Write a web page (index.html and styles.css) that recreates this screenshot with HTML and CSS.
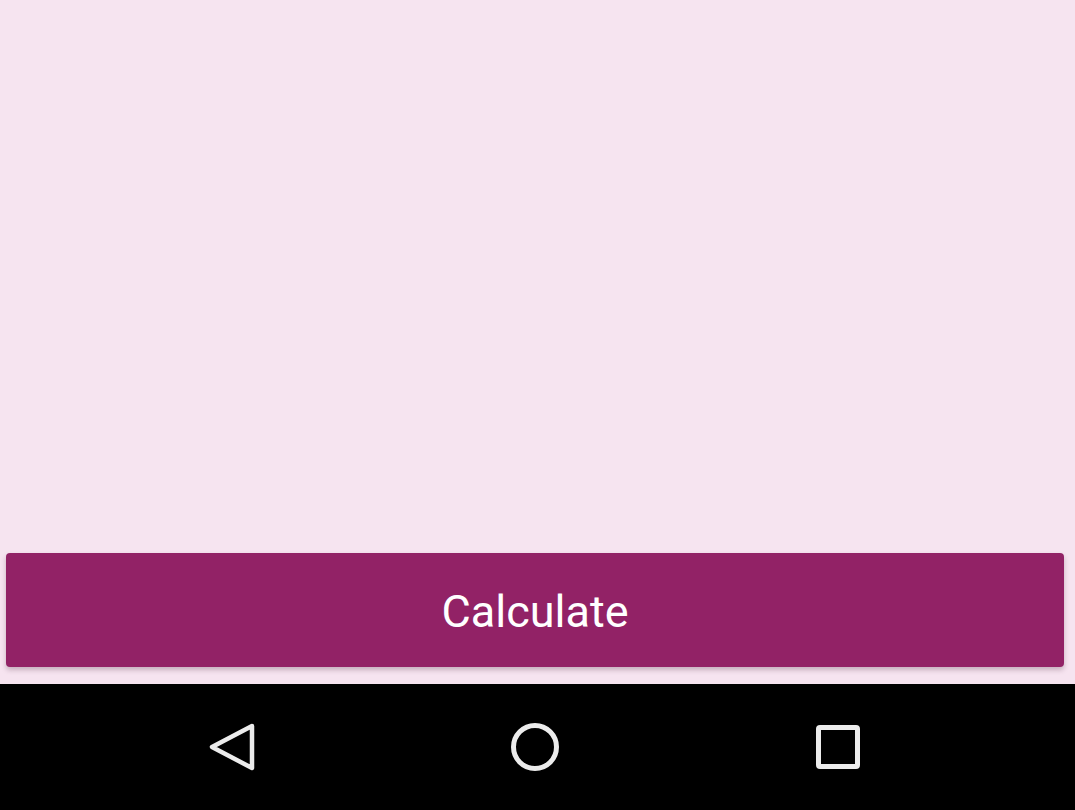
FILE: index.html
```html
<!DOCTYPE html>
<html>
<head>
<meta charset="utf-8">
<link rel="stylesheet" href="styles.css">
</head>
<body>
<div class="screen">
  <div class="content"></div>
  <div class="action">
    <button class="calc">Calculate</button>
  </div>
  <nav class="navbar">
    <svg class="nav-icon" viewBox="0 0 48 48" width="48" height="48">
      <path d="M44 3 L4 24 L44 45 Z" fill="none" stroke="#ececec" stroke-width="4.5" stroke-linejoin="round"/>
    </svg>
    <svg class="nav-icon" viewBox="0 0 48 48" width="48" height="48">
      <circle cx="24" cy="24" r="21.5" fill="none" stroke="#ececec" stroke-width="5"/>
    </svg>
    <svg class="nav-icon" viewBox="0 0 48 48" width="48" height="48">
      <rect x="4.5" y="4.5" width="39" height="39" rx="1.5" fill="none" stroke="#ececec" stroke-width="5"/>
    </svg>
  </nav>
</div>
</body>
</html>
```
FILE: styles.css
```css
html, body {
  margin: 0;
  padding: 0;
}
body {
  width: 1075px;
  height: 810px;
  overflow: hidden;
  font-family: Roboto, "Liberation Sans", sans-serif;
}
.screen {
  display: flex;
  flex-direction: column;
  height: 810px;
  background: #f6e4f0;
}
.content {
  flex: 1;
}
.action {
  padding: 0 11px 17px 6px;
}
.calc {
  display: block;
  width: 100%;
  height: 114px;
  border: none;
  border-radius: 4px;
  background: #922266;
  color: #ffffff;
  font-family: Roboto, "Liberation Sans", sans-serif;
  font-size: 45px;
  font-weight: 400;
  letter-spacing: 0;
  padding: 3px 0 0 0;
  box-shadow: 0 3px 5px rgba(80, 40, 60, 0.28);
}
.navbar {
  height: 126px;
  background: #000000;
  display: flex;
  align-items: center;
  justify-content: center;
  gap: 255px;
  padding-right: 5px;
}
.nav-icon {
  display: block;
}
```
